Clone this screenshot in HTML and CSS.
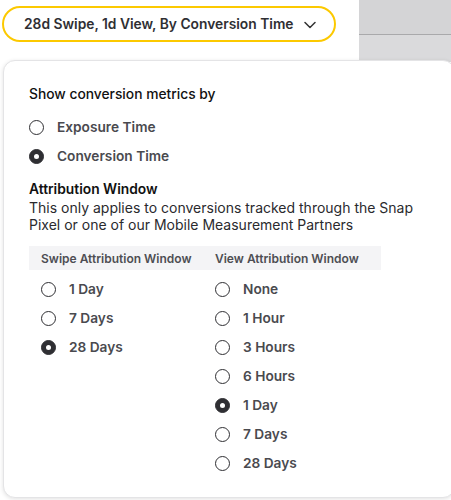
FILE: index.html
```html
<!DOCTYPE html>
<html>
<head>
<meta charset="utf-8">
<link rel="stylesheet" href="styles.css">
</head>
<body>
<div class="top">
  <div class="top-left">
    <button class="picker">
      <span>28d Swipe, 1d View, By Conversion Time</span>
      <svg class="chev" width="12" height="8" viewBox="0 0 12 8"><path d="M1 1.5 L6 6.5 L11 1.5" fill="none" stroke="#333" stroke-width="1.5" stroke-linecap="round" stroke-linejoin="round"/></svg>
    </button>
  </div>
  <div class="top-right">
    <div class="tr-upper"></div>
    <div class="tr-lower"></div>
  </div>
</div>
<div class="popup">
  <div class="title">Show conversion metrics by</div>
  <div class="group">
    <div class="opt"><span class="radio"></span><span class="lbl">Exposure Time</span></div>
    <div class="opt"><span class="radio on"></span><span class="lbl">Conversion Time</span></div>
  </div>
  <div class="attr-title">Attribution Window</div>
  <div class="desc">This only applies to conversions tracked through the Snap Pixel or one of our Mobile Measurement Partners</div>
  <div class="table">
    <div class="thead">
      <div class="th">Swipe Attribution Window</div>
      <div class="th">View Attribution Window</div>
    </div>
    <div class="cols">
      <div class="col">
        <div class="opt"><span class="radio"></span><span class="lbl">1 Day</span></div>
        <div class="opt"><span class="radio"></span><span class="lbl">7 Days</span></div>
        <div class="opt"><span class="radio on"></span><span class="lbl">28 Days</span></div>
      </div>
      <div class="col">
        <div class="opt"><span class="radio"></span><span class="lbl">None</span></div>
        <div class="opt"><span class="radio"></span><span class="lbl">1 Hour</span></div>
        <div class="opt"><span class="radio"></span><span class="lbl">3 Hours</span></div>
        <div class="opt"><span class="radio"></span><span class="lbl">6 Hours</span></div>
        <div class="opt"><span class="radio on"></span><span class="lbl">1 Day</span></div>
        <div class="opt"><span class="radio"></span><span class="lbl">7 Days</span></div>
        <div class="opt"><span class="radio"></span><span class="lbl">28 Days</span></div>
      </div>
    </div>
  </div>
</div>
</body>
</html>
```
FILE: styles.css
```css
* { box-sizing: border-box; }
html, body { margin: 0; padding: 0; }
body {
  width: 451px;
  height: 500px;
  overflow: hidden;
  position: relative;
  background: #ffffff;
  font-family: Inter, "Noto Sans", sans-serif;
  color: #222;
}
.top {
  display: flex;
  height: 62px;
}
.top-left {
  width: 359px;
  background: #fff;
  padding: 6px 0 0 2px;
}
.top-right {
  flex: 1;
  display: flex;
  flex-direction: column;
}
.tr-upper {
  height: 35px;
  background: #d4d4d6;
  border-bottom: 1px solid #a9a9ab;
}
.tr-lower {
  flex: 1;
  background: #dadadc;
}
.picker {
  display: flex;
  align-items: center;
  gap: 11px;
  height: 36px;
  width: 334px;
  padding: 0 0 0 20px;
  border: 2px solid #fcc900;
  border-radius: 18px;
  background: #fff;
  font-family: inherit;
  font-size: 13.8px;
  font-weight: 600;
  color: #2f2f33;
  letter-spacing: 0;
}
.chev { margin-top: 1px; }
.popup {
  position: absolute;
  left: 3px;
  top: 60px;
  width: 452px;
  height: 438px;
  background: #fff;
  border: 1px solid #e4e4e6;
  border-radius: 12px;
  box-shadow: 0 1px 4px rgba(0,0,0,0.12);
  padding: 24px 0 0 25px;
}
.title {
  font-size: 13.8px;
  font-weight: 500;
  color: #111;
  line-height: 18px;
}
.group {
  margin-top: 15px;
  display: flex;
  flex-direction: column;
  gap: 11px;
}
.opt {
  display: flex;
  align-items: center;
  gap: 13px;
  height: 18px;
}
.radio {
  width: 15px;
  height: 15px;
  border: 1.5px solid #2f2f33;
  border-radius: 50%;
  flex: none;
  background: #fff;
}
.radio.on {
  background: #2f2f33;
  position: relative;
}
.radio.on::after {
  content: "";
  position: absolute;
  left: 50%;
  top: 50%;
  width: 5px;
  height: 5px;
  margin: -2.5px 0 0 -2.5px;
  background: #fff;
  border-radius: 50%;
}
.lbl {
  font-size: 13.7px;
  font-weight: 600;
  color: #4a4a4f;
}
.attr-title {
  margin-top: 15px;
  font-size: 13.8px;
  font-weight: 600;
  color: #111;
  line-height: 18px;
}
.desc {
  margin-top: 1px;
  width: 400px;
  font-size: 14px;
  font-weight: 400;
  color: #2a2a2e;
  line-height: 17px;
}
.table {
  margin-top: 13px;
}
.thead {
  display: flex;
  width: 352px;
  height: 24px;
  background: #f4f4f6;
  align-items: center;
  padding-left: 12px;
}
.th {
  font-size: 12px;
  font-weight: 600;
  color: #4e4e53;
}
.th:first-child { width: 174px; }
.cols {
  display: flex;
  padding: 10px 0 0 12px;
}
.col {
  display: flex;
  flex-direction: column;
  gap: 11px;
}
.col:first-child { width: 174px; }
```
